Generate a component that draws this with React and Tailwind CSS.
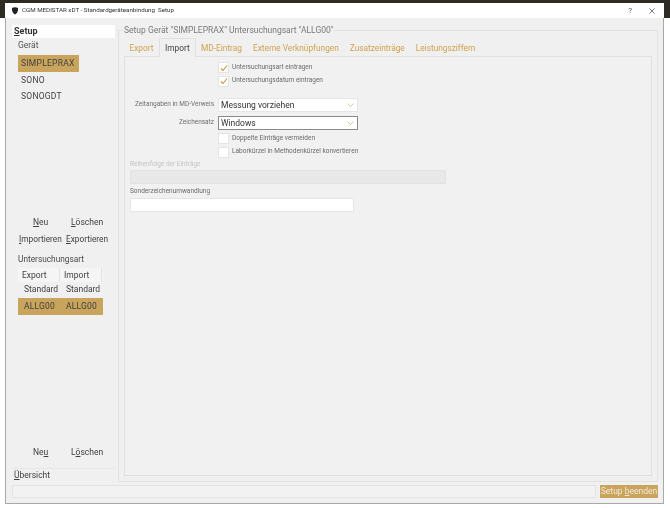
const gold = 'bg-[#c9a45c]'

function Check({ checked }) {
  return (
    <span className="flex h-[11px] w-[11px] shrink-0 items-center justify-center border border-[#e4e4e4] bg-white">
      {checked && (
        <svg width="8" height="8" viewBox="0 0 8 8" fill="none" stroke="#c9963c" strokeWidth="1.1">
          <path d="M1 4.5 L3 6.5 L7 1.5" />
        </svg>
      )}
    </span>
  )
}

function CheckRow({ label, checked, className = '' }) {
  return (
    <div className={`flex h-[13px] items-center gap-[3px] text-[6.5px] text-[#6a6a6a] ${className}`}>
      <Check checked={checked} />
      <span>{label}</span>
    </div>
  )
}

function Select({ label, value, focus }) {
  return (
    <div className="flex items-center">
      <span className="w-[91px] pr-[4px] text-right text-[6.5px] whitespace-nowrap text-[#6f6f6f]">{label}</span>
      <div
        className={`flex h-[14px] w-[140px] items-center justify-between bg-white pl-[2px] pr-[3px] text-[8.5px] text-[#333] border ${
          focus ? 'border-[#8a8a8a]' : 'border-[#e6e6e6]'
        }`}
      >
        <span>{value}</span>
        <svg width="7" height="4" viewBox="0 0 7 4" fill="none" stroke="#d8c08c" strokeWidth="0.9">
          <path d="M0.5 0.5 L3.5 3.5 L6.5 0.5" />
        </svg>
      </div>
    </div>
  )
}

function U({ children }) {
  return <span className="underline">{children}</span>
}

function Sidebar() {
  return (
    <aside className="flex w-[103px] shrink-0 flex-col text-[#3f3f3f]">
      <div className="flex h-[13px] items-center bg-white pl-[2px] text-[9px] font-bold text-[#333]">
        <U>S</U>etup
      </div>
      <div className="mt-[1px] flex h-[13px] items-center pl-[6px] text-[8.5px] text-[#555]">Gerät</div>
      <div className="mt-[3px] flex flex-col pl-[6px] text-[8.5px] tracking-[0.25px]">
        <div className={`flex h-[17px] w-[61px] items-center pl-[3px] ${gold}`}>SIMPLEPRAX</div>
        <div className="flex h-[17px] items-center pl-[3px]">SONO</div>
        <div className="flex h-[15px] items-center pl-[3px]">SONOGDT</div>
      </div>

      <div className="mt-[111px] flex h-[14px] items-center text-[8.5px]">
        <span className="w-[54px] pl-[21px]"><U>N</U>eu</span>
        <span className="pl-[5px]"><U>L</U>öschen</span>
      </div>
      <div className="mt-[3px] flex h-[14px] items-center text-[8.3px]">
        <span className="w-[54px] pl-[7px]"><U>I</U>mportieren</span>
        <span><U>E</U>xportieren</span>
      </div>
      <div className="mt-[6px] flex h-[14px] items-center pl-[6px] text-[8.3px] text-[#4a4a4a]">Untersuchungsart</div>

      <div className="mt-[2px] ml-[6px] w-[85px] text-[8.5px]">
        <div className="flex h-[14px] items-center bg-[#f5f5f5]">
          <span className="h-full w-[42px] border-r border-[#e2e2e2] pl-[4px] leading-[14px]">Export</span>
          <span className="h-full w-[42px] border-r border-[#e2e2e2] pl-[4px] leading-[14px]">Import</span>
        </div>
        <div className="flex h-[15px] items-center">
          <span className="w-[42px] pl-[6px]">Standard</span>
          <span className="w-[42px] pl-[6px]">Standard</span>
        </div>
        <div className={`mt-[1px] flex h-[17px] items-center tracking-[0.2px] ${gold}`}>
          <span className="w-[42px] pl-[6px]">ALLG00</span>
          <span className="w-[42px] pl-[6px]">ALLG00</span>
        </div>
      </div>

      <div className="flex flex-1 flex-col justify-end">
        <div className="flex h-[14px] items-center text-[8.5px]">
          <span className="w-[54px] pl-[21px]">Ne<U>u</U></span>
          <span className="pl-[5px]">L<U>ö</U>schen</span>
        </div>
        <div className="mt-[9px] flex h-[14px] items-center border-t border-[#e6e6e6] pl-[2px] text-[8.5px]">
          <U>Ü</U>bersicht
        </div>
      </div>
    </aside>
  )
}

function Tabs() {
  const tabs = ['Export', 'Import', 'MD-Eintrag', 'Externe Verknüpfungen', 'Zusatzeinträge', 'Leistungsziffern']
  return (
    <div className="relative z-10 mt-[4px] -mb-px flex h-[18px] items-end text-[8.3px] text-[#cfa24e]">
      {tabs.map((tab) =>
        tab === 'Import' ? (
          <span
            key={tab}
            className="flex h-[19px] items-center border border-b-0 border-[#e0e0e0] bg-[#f0f0f0] px-[5px] text-[#444]"
          >
            {tab}
          </span>
        ) : (
          <span key={tab} className="flex h-[18px] items-center px-[5.5px]">
            {tab}
          </span>
        ),
      )}
    </div>
  )
}

function ImportPanel() {
  return (
    <div className="flex-1 border border-[#e0e0e0] bg-[#f1f1f1] pt-[4px]">
      <div className="pl-[93px]">
        <CheckRow label="Untersuchungsart eintragen" checked />
        <CheckRow label="Untersuchungsdatum eintragen" checked className="mt-[0.5px]" />
      </div>
      <div className="mt-[10.5px] flex flex-col gap-[4px] pl-[2px]">
        <Select label="Zeitangaben in MD-Verweis" value="Messung vorziehen" />
        <Select label="Zeichensatz" value="Windows" focus />
      </div>
      <div className="mt-[2px] pl-[93px]">
        <CheckRow label="Doppelte Einträge vermeiden" />
        <CheckRow label="Laborkürzel in Methodenkürzel konvertieren" className="mt-[0.5px]" />
      </div>
      <div className="pl-[5px]">
        <div className="flex h-[11px] items-center pt-[1px] text-[6.5px] text-[#c4c4c4]">Reihenfolge der Einträge</div>
        <div className="h-[14px] w-[316px] border border-[#e2e2e2] bg-[#e8e8e8]" />
        <div className="mt-[1px] flex h-[13px] items-center pt-[2px] text-[6.5px] text-[#6a6a6a]">Sonderzeichenumwandlung</div>
        <div className="h-[14px] w-[224px] border border-[#e6e6e6] bg-white" />
      </div>
    </div>
  )
}

export default function App() {
  return (
    <div className="flex h-[508px] w-[670px] flex-col bg-white font-['Roboto',sans-serif] blur-[0.35px]">
      <div className="flex h-[18px] shrink-0 items-start bg-[#2e2a24]">
        <div className="mt-[3px] ml-[5px] flex h-[15px] w-[659px] items-center bg-white pl-[6px] text-[6.2px] text-[#333]">
          <svg width="8" height="8" viewBox="0 0 8 8" fill="#222">
            <path d="M1 1 C2.5 0 5.5 0 7 1 C7.5 4 6 6.5 4 7.5 C2 6.5 0.5 4 1 1 Z" />
          </svg>
          <span className="ml-[3px]">CGM MEDISTAR xDT - Standardgeräteanbindung&nbsp;&nbsp;Setup</span>
          <span className="ml-auto text-[8px] text-[#555]">?</span>
          <svg className="mr-[9px] ml-[17px]" width="6" height="6" viewBox="0 0 7 7" stroke="#555" strokeWidth="0.9">
            <path d="M0.5 0.5 L6.5 6.5 M6.5 0.5 L0.5 6.5" />
          </svg>
        </div>
      </div>

      <div className="ml-[5px] flex h-[486px] w-[659px] flex-col border-x border-b border-[#a8a8a8] bg-[#f0f0f0] pt-[7px] pr-[5px] pb-[5px] pl-[6px]">
        <div className="flex min-h-0 flex-1 gap-[3px]">
          <Sidebar />
          <fieldset className="flex min-w-0 flex-1 flex-col border border-[#e2e2e2] px-[5px] pb-[5px]">
            <legend className="-ml-[1px] px-[1px] text-[8.5px] leading-[10px] text-[#7a7a7a]">
              Setup Gerät "SIMPLEPRAX" Untersuchungsart "ALLG00"
            </legend>
            <div className="flex flex-1 flex-col">
              <Tabs />
              <ImportPanel />
            </div>
          </fieldset>
        </div>
        <div className="mt-[3px] flex h-[13px] shrink-0 gap-[4px]">
          <div className="w-[584px] border border-[#e4e4e4] bg-[#f2f2f2]" />
          <div className={`flex w-[58px] items-center justify-center text-[8.5px] text-[#f3ead6] ${gold}`}>
            Setup&nbsp;<U>b</U>eenden
          </div>
        </div>
      </div>
    </div>
  )
}
